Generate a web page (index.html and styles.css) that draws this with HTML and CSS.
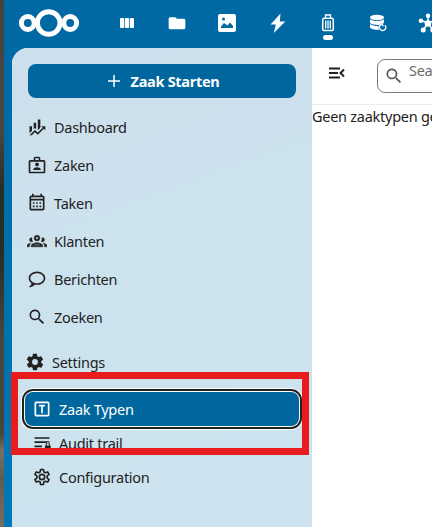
FILE: index.html
```html
<!DOCTYPE html>
<html lang="nl">
<head>
<meta charset="utf-8">
<title>Zaak Typen</title>
<link rel="stylesheet" href="styles.css">
</head>
<body>
<div class="desktop">
<div class="app">
  <header class="topbar">
    <svg class="logo" viewBox="0 0 62 30" fill="none" stroke="#fff"><circle cx="30.700" cy="15" r="11.300" stroke-width="5"/><circle cx="9.800" cy="15" r="6.400" stroke-width="5"/><circle cx="52.200" cy="15" r="6.400" stroke-width="5"/></svg>
    <nav class="apps">
      <span><svg viewBox="0 0 20 20"><rect x="3" y="5" width="4.200" height="10" rx="1"/><rect x="7.900" y="5" width="4.200" height="10" rx="1"/><rect x="12.800" y="5" width="4.200" height="10" rx="1"/></svg></span>
      <span><svg viewBox="0 0 24 24"><path d="M10 4H4c-1.100 0-2 .9-2 2v12c0 1.100.9 2 2 2h16c1.100 0 2-.9 2-2V8c0-1.100-.9-2-2-2h-8z" transform="translate(0 1.500) scale(1 .9)"/></svg></span>
      <span><svg viewBox="0 0 20 20"><path fill-rule="evenodd" d="M3 1h14c1.100 0 2 .9 2 2v14c0 1.100-.9 2-2 2H3c-1.100 0-2-.9-2-2V3c0-1.100.9-2 2-2zM6.500 4.500a1.500 1.500 0 1 0 0 3 1.500 1.500 0 0 0 0-3zM4 15h12v-2l-3-3.500-2.500 3L7 10l-3 3.500z"/></svg></span>
      <span><svg viewBox="0 0 20 20"><path d="M12.500.5 2.500 11.500h5.300l-2 8.500L17.300 8.500h-5.500z"/></svg></span>
      <span class="current"><svg viewBox="0 0 20 20" fill="none" stroke="#fff"><rect x="4.700" y="5.200" width="10.600" height="12.300" rx="1.500" stroke-width="1.500"/><path d="M7.500 5V2h5v3M7.700 7.500v8M10 7.500v8M12.300 7.500v8" stroke-width="1.300"/></svg></span>
      <span><svg viewBox="0 0 20 20"><ellipse cx="9" cy="4.500" rx="7" ry="2.700"/><path d="M2 6.200c2 2.400 12 2.400 14 0v3c-2 .4-3.500 1.300-4.300 2.700C7 12 3 11.400 2 9.700zM2 11c1.600 1.500 5 2 8.700 2-.3 1.500 0 2.700.6 3.800C7 17 3 16.200 2 14.500z"/><path d="M13 11.600a3.200 3.200 0 1 0 4 .6M15.500 9.300l-2 1.900 2 1.800" fill="none" stroke="#fff" stroke-width="1.300"/></svg></span>
      <span><svg viewBox="0 0 20 20"><path d="m10 10 .2-7.500M10 10 3 7.500M10 10l7-2.500M10 10l-4.500 6.500M10 10l4.500 6.500" stroke="#fff" stroke-width="1.500"/><circle cx="10" cy="10.500" r="3.300"/><circle cx="10" cy="2.700" r="2.200"/><circle cx="2.900" cy="7.700" r="2.200"/><circle cx="17.100" cy="7.700" r="2.200"/><circle cx="5.200" cy="17" r="2.500"/><circle cx="14.800" cy="17" r="2.500"/></svg></span>
    </nav>
  </header>
  <div class="content">
    <aside class="sidebar">
      <button class="start"><svg viewBox="0 0 24 24"><path d="M20 13h-7v7h-2v-7H4v-2h7V4h2v7h7z"/></svg><span>Zaak Starten</span></button>
      <ul class="nav">
        <li><svg viewBox="0 0 24 24"><path d="M6 16.500 3 19.400V11h3zM11 14.700l-1.600-1.400L8 14.600V7h3zM16 13l-3 3V3h3zM18.800 12.800 17 11h5v5l-1.800-1.800L13 21.400l-3.500-3.100L5.800 22H3l6.500-6.400L13 18.600z"/></svg><span>Dashboard</span></li>
        <li><svg viewBox="0 0 24 24"><path fill-rule="evenodd" d="M20 6h-4V4c0-1.100-.9-2-2-2h-4c-1.100 0-2 .9-2 2v2H4c-1.100 0-2 .9-2 2v12c0 1.100.9 2 2 2h16c1.100 0 2-.9 2-2V8c0-1.100-.9-2-2-2zM10 4h4v2h-4zm10 16H4V8h16zM12 9a2.300 2.300 0 1 0 0 4.600A2.300 2.300 0 0 0 12 9zm4.500 9v-.9c0-1.500-2.500-2.400-4.500-2.400s-4.500.9-4.500 2.400v.9z"/></svg><span>Zaken</span></li>
        <li><svg viewBox="0 0 24 24"><path fill-rule="evenodd" d="M7 11h2v2H7zm4 0h2v2h-2zm4 0h2v2h-2zm-8 4h2v2H7zm4 0h2v2h-2zm4 0h2v2h-2zM5 3h1V1h2v2h8V1h2v2h1c1.100 0 2 .9 2 2v14c0 1.100-.9 2-2 2H5c-1.100 0-2-.9-2-2V5c0-1.100.9-2 2-2zm0 6v10h14V9zm0-4v2h14V5z"/></svg><span>Taken</span></li>
        <li><svg viewBox="0 0 24 24"><path fill-rule="evenodd" stroke="#222" stroke-width=".5" d="M12 5a3.500 3.500 0 1 0 0 7 3.500 3.500 0 0 0 0-7zm0 2a1.500 1.500 0 1 1 0 3 1.500 1.500 0 0 1 0-3zM5.500 8a2.500 2.500 0 1 0 1.300 4.600 5.500 5.500 0 0 1-.7-4.500zm13 0-.6.100a5.500 5.500 0 0 1-.7 4.500A2.500 2.500 0 1 0 18.500 8zM12 14c-2.300 0-7 1.200-7 3.500V19h14v-1.500c0-2.300-4.700-3.500-7-3.500zm-7.300.6C2.800 14.900 0 15.800 0 17.500V19h3v-1.900c0-1 .7-1.800 1.700-2.500zm14.600 0c1 .7 1.700 1.500 1.700 2.500V19h3v-1.500c0-1.700-2.800-2.600-4.700-2.900zM12 16c1.500 0 3.200.5 4.200 1H7.800c1-.5 2.700-1 4.200-1z"/></svg><span>Klanten</span></li>
        <li><svg viewBox="0 0 24 24"><path d="M12 3C6.500 3 2 6.600 2 11c0 2.400 1.300 4.500 3.400 6 0 .8-.5 2.500-3.400 5 3.500-.2 5.800-1.500 7.400-3.200.8.100 1.700.2 2.600.2 5.500 0 10-3.600 10-8s-4.500-8-10-8m0 14c-4.400 0-8-2.700-8-6s3.600-6 8-6 8 2.700 8 6-3.600 6-8 6"/></svg><span>Berichten</span></li>
        <li><svg viewBox="0 0 24 24"><path d="M9.500 3a6.500 6.500 0 0 1 4.900 10.700l.3.300h.8l5 5-1.500 1.500-5-5v-.8l-.3-.3A6.500 6.500 0 1 1 9.500 3m0 2a4.500 4.500 0 1 0 0 9 4.500 4.500 0 0 0 0-9"/></svg><span>Zoeken</span></li>
      </ul>
      <div class="settings-head"><svg viewBox="0 0 24 24"><path d="M12 15.500A3.500 3.500 0 1 1 12 8.500a3.500 3.500 0 0 1 0 7m7.400-2.500.1-1-.1-1 2.100-1.600c.2-.2.200-.4.100-.6l-2-3.500c-.1-.2-.4-.3-.6-.2l-2.500 1c-.5-.4-1.100-.7-1.700-1l-.4-2.600c0-.3-.2-.5-.5-.5h-4c-.3 0-.5.200-.5.500L9 5.100c-.6.300-1.200.6-1.700 1l-2.500-1c-.2-.1-.5 0-.6.200l-2 3.500c-.1.200-.1.400.1.600L4.500 11l-.1 1 .1 1-2.100 1.600c-.2.200-.2.400-.1.600l2 3.500c.1.200.4.300.6.200l2.500-1c.5.400 1.100.7 1.700 1l.4 2.600c0 .3.200.5.500.5h4c.3 0 .5-.2.500-.5l.4-2.600c.6-.3 1.200-.6 1.700-1l2.500 1c.2.100.5 0 .6-.2l2-3.500c.1-.2.100-.4-.1-.6z"/></svg><span>Settings</span></div>
      <ul class="settings">
        <li class="selected"><svg viewBox="0 0 24 24"><path fill-rule="evenodd" d="M5 3h14c1.100 0 2 .9 2 2v14c0 1.100-.9 2-2 2H5c-1.100 0-2-.9-2-2V5c0-1.100.9-2 2-2zm0 2v14h14V5zm3.500 2h7v2H13v8h-2V9H8.500z"/></svg><span>Zaak Typen</span></li>
        <li class="audit"><svg viewBox="0 0 24 24"><path d="M3 5h18v2H3zm0 5h18v2H3zm0 5h9v2H3zm18.500 0v-1.500a2.500 2.500 0 0 0-5 0V15c-.6 0-1 .5-1 1v4h7v-4c0-.5-.4-1-1-1m-1.200 0h-2.600v-1.500a1.300 1.300 0 0 1 2.600 0z"/></svg><span>Audit trail</span></li>
        <li class="config"><svg viewBox="0 0 24 24" fill="none" stroke="#222" stroke-width="2" stroke-linejoin="round"><circle cx="12" cy="12" r="3.200"/><path d="M10.300 3h3.400l.5 2.900 1.800 1 2.800-1 1.700 2.900-2.300 1.900v2.600l2.300 1.900-1.700 2.900-2.800-1-1.800 1-.5 2.900h-3.400l-.5-2.900-1.800-1-2.800 1-1.700-2.900 2.300-1.900v-2.600L3.500 8.800l1.700-2.900 2.800 1 1.800-1z"/></svg><span>Configuration</span></li>
      </ul>
    </aside>
    <main>
      <div class="tools">
        <svg class="collapse" viewBox="0 0 18 14" fill="none" stroke="#222" stroke-width="2"><path d="M1 2.500h11M1 7h9M1 11.500h11M16 3.500 12.500 7l3.500 3.500"/></svg>
        <div class="search"><svg viewBox="0 0 24 24"><path d="M9.500 3a6.500 6.500 0 0 1 4.900 10.700l.3.300h.8l5 5-1.500 1.500-5-5v-.8l-.3-.3A6.500 6.500 0 1 1 9.500 3m0 2a4.500 4.500 0 1 0 0 9 4.500 4.500 0 0 0 0-9"/></svg><span>Search</span></div>
      </div>
      <p class="empty">Geen zaaktypen gevonden</p>
    </main>
  </div>
</div>
</div>
<div class="highlight"></div>
</body>
</html>
```
FILE: styles.css
```css
* { box-sizing: border-box; }
body {
  margin: 0;
  width: 432px;
  height: 527px;
  overflow: hidden;
  font: 14.5px/20px "Noto Sans", sans-serif;
  letter-spacing: -0.27px;
  color: #222;
}
.desktop {
  height: 527px;
  padding-left: 4px;
  background: linear-gradient(#45423e 0, #4b4641 130px, #292b27 190px, #282b26 250px, #484640 340px, #454640 435px, #77716a 450px, #625a50 480px, #7a6d60 527px);
}
.app {
  height: 527px;
  background: linear-gradient(#0069a3, #0078b7);
  overflow: hidden;
}
ul { list-style: none; margin: 0; padding: 0; }
svg { display: block; flex: none; fill: #222; }
.topbar {
  height: 48px;
  display: flex;
  align-items: flex-start;
  background: #0069a3;
}
.logo { width: 62px; height: 30px; margin: 8px 0 0 14px; fill: none; }
.apps { display: flex; margin-left: 22px; }
.apps span {
  width: 50.2px;
  height: 48px;
  flex: none;
  display: flex;
  flex-direction: column;
  align-items: center;
  padding-top: 13px;
}
.apps svg { width: 20px; height: 20px; fill: #fff; }
.current::after {
  content: "";
  width: 10px;
  height: 5px;
  margin-top: 2px;
  border-radius: 3px;
  background: #fff;
}
.apps .current svg { fill: none; }
.content {
  display: flex;
  margin-left: 8px;
  height: 479px;
  width: 500px;
  border-radius: 16px 0 0 0;
  overflow: hidden;
  background: #fff;
}
.sidebar {
  width: 300px;
  flex: none;
  padding-top: 16px;
  background: linear-gradient(160deg, #cddfec, #cce3ee 45%, #cde4f0);
}
.start {
  display: flex;
  align-items: center;
  justify-content: center;
  width: 268px;
  height: 34px;
  margin: 0 16px;
  padding: 0;
  border: 0;
  border-radius: 8px;
  background: #00679e;
  color: #fff;
  font: bold 14.5px/20px "Noto Sans", sans-serif;
  letter-spacing: -0.3px;
}
.start svg { width: 18px; height: 18px; margin-right: 8px; fill: #fff; }
.nav { padding-top: 10px; }
.nav li {
  height: 38px;
  display: flex;
  align-items: center;
  padding-left: 15px;
}
.nav svg { width: 20px; height: 20px; margin-right: 7px; }
.settings-head {
  display: flex;
  align-items: center;
  height: 38px;
  margin-top: 7px;
  padding-left: 13px;
}
.settings-head svg { width: 20px; height: 20px; margin-right: 7px; }
.settings { padding-top: 11px; }
.settings li {
  display: flex;
  align-items: center;
  height: 34px;
  padding-left: 20px;
}
.settings svg { width: 20px; height: 20px; margin-right: 7px; }
.settings .selected {
  width: 274px;
  margin-left: 13px;
  padding-left: 7px;
  border-radius: 8px;
  background: #00679e;
  color: #fff;
  box-shadow: 0 0 0 1px #fff, 0 0 0 3px #222, 0 0 0 4px #fff;
}
.selected svg { fill: #fff; }
.config svg { fill: none; }
main { flex: 1; min-width: 0; white-space: nowrap; }
.tools {
  display: flex;
  height: 57px;
  border-bottom: 1px solid #ededed;
}
.collapse { width: 18px; height: 14px; margin: 18px 0 0 16px; fill: none; }
.search {
  display: flex;
  width: 180px;
  height: 34px;
  margin: 11px 0 0 31px;
  padding: 6px 0 0 6px;
  border: 1px solid #7a7a7a;
  border-radius: 8px;
  color: #6b6b6b;
}
.search svg { width: 20px; height: 20px; fill: #555; }
.search span { margin: -6px 0 0 5px; }
.empty { margin: 1px 0 0; }
.highlight {
  position: absolute;
  left: 11px;
  top: 372px;
  width: 298px;
  height: 83px;
  border: 7px solid #e81c1c;
}
```
